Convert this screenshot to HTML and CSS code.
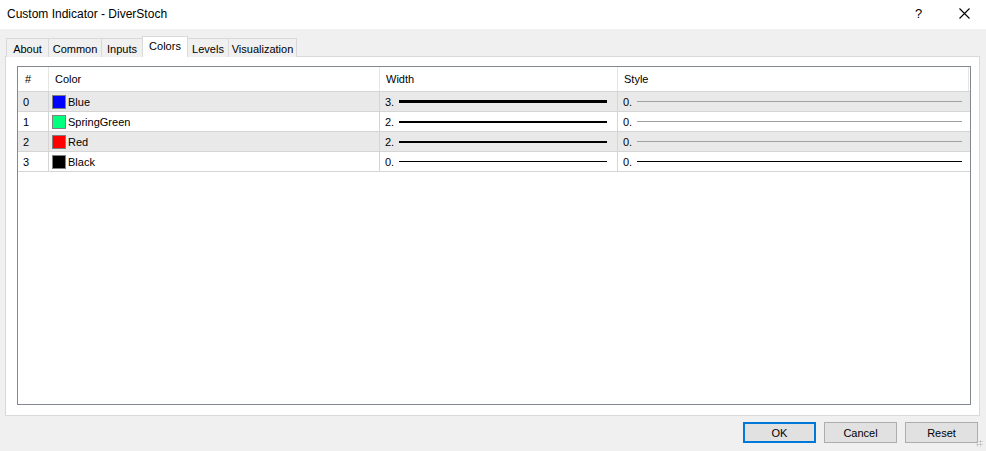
FILE: index.html
```html
<!DOCTYPE html>
<html lang="en">
  <head>
    <meta charset="UTF-8" />
    <title>Custom Indicator - DiverStoch</title>
    <link rel="stylesheet" href="styles.css">
  </head>
  <body>
    <div class="window">
      <!-- title bar -->
      <div class="titlebar">
        <span class="title">Custom Indicator - DiverStoch</span>
        <span class="help">?</span>
        <span class="close">
          <svg width="11" height="11" viewBox="0 0 11 11"><path d="M0.5 0.5 L10.5 10.5 M10.5 0.5 L0.5 10.5" stroke="#000" stroke-width="1.1" fill="none"/></svg>
        </span>
      </div>

      <div class="content">
        <div class="tabs">
          <div class="tab tab-about">About</div>
          <div class="tab tab-common">Common</div>
          <div class="tab tab-inputs">Inputs</div>
          <div class="tab tab-colors active">Colors</div>
          <div class="tab tab-levels">Levels</div>
          <div class="tab tab-vis">Visualization</div>
        </div>

        <div class="panel">
          <div class="grid">
            <div class="row head">
              <div class="cell c-num">#</div>
              <div class="cell c-color">Color</div>
              <div class="cell c-width">Width</div>
              <div class="cell c-style">Style</div>
            </div>

            <div class="row shade">
              <div class="cell c-num">0</div>
              <div class="cell c-color"><span class="swatch" style="background:#0000ff"></span>Blue</div>
              <div class="cell c-width">3.<span class="line w3"></span></div>
              <div class="cell c-style">0.<span class="sline"></span></div>
            </div>
            <div class="row">
              <div class="cell c-num">1</div>
              <div class="cell c-color"><span class="swatch" style="background:#00ff7f"></span>SpringGreen</div>
              <div class="cell c-width">2.<span class="line w2"></span></div>
              <div class="cell c-style">0.<span class="sline"></span></div>
            </div>
            <div class="row shade">
              <div class="cell c-num">2</div>
              <div class="cell c-color"><span class="swatch" style="background:#ff0000"></span>Red</div>
              <div class="cell c-width">2.<span class="line w2"></span></div>
              <div class="cell c-style">0.<span class="sline"></span></div>
            </div>
            <div class="row">
              <div class="cell c-num">3</div>
              <div class="cell c-color"><span class="swatch" style="background:#000000"></span>Black</div>
              <div class="cell c-width">0.<span class="line w1"></span></div>
              <div class="cell c-style">0.<span class="sline dark"></span></div>
            </div>
          </div>
        </div>

        <div class="buttons">
          <button class="btn default">OK</button>
          <button class="btn">Cancel</button>
          <button class="btn">Reset</button>
        </div>
      </div>
      <div class="grip"></div>
    </div>
  </body>
</html>
```

FILE: styles.css
```css
* {
  margin: 0;
  padding: 0;
  box-sizing: border-box;
}

body {
  width: 986px;
  height: 451px;
  overflow: hidden;
  background-color: #f0f0f0;
  font-family: "Liberation Sans", Arial, sans-serif;
  font-size: 11px;
  color: #000;
}

.window {
  width: 986px;
  height: 451px;
  position: relative;
}

/* title bar */
.titlebar {
  height: 29px;
  background-color: #fff;
  display: flex;
  align-items: center;
}

.title {
  flex: 1;
  padding-left: 7px;
  font-size: 12px;
  padding-bottom: 2px;
}

.help {
  width: 12px;
  margin-right: 32px;
  font-size: 13px;
  padding-bottom: 2px;
}

.close {
  width: 11px;
  height: 11px;
  margin-right: 16px;
  margin-bottom: 3px;
  display: flex;
}

/* tabs */
.content {
  padding: 7px 6px 0 5px;
}

.tabs {
  display: flex;
  align-items: flex-start;
  height: 21px;
  margin-bottom: -1px;
  padding-left: 1px;
}

.tab {
  height: 19px;
  margin-top: 2px;
  border: 1px solid #d9d9d9;
  border-bottom: none;
  background-color: #f0f0f0;
  display: flex;
  align-items: center;
  justify-content: center;
  margin-left: -1px;
  padding-top: 1px;
}

.tab-about { width: 43px; margin-left: 0; }
.tab-common { width: 54px; }
.tab-inputs { width: 42px; }
.tab-colors { width: 46px; }
.tab-levels { width: 42px; }
.tab-vis { width: 69px; }

.tab.active {
  height: 21px;
  margin-top: 0;
  background-color: #fff;
  position: relative;
  z-index: 1;
  padding-top: 0;
  padding-bottom: 3px;
}

.panel {
  height: 360px;
  background-color: #fff;
  border: 1px solid #d9d9d9;
  padding: 9px 8px 10px 11px;
}

/* list view */
.grid {
  height: 339px;
  border: 1px solid #828790;
  background-color: #fff;
}

.row {
  display: flex;
  height: 20px;
  border-bottom: 1px solid #d5d5d5;
}

.row.head {
  height: 25px;
  border-bottom: 1px solid #d5d5d5;
}

.row.shade {
  background-color: #e9e9e9;
}

.cell {
  display: flex;
  align-items: center;
  padding-left: 5px;
  border-right: 1px solid #d5d5d5;
  white-space: nowrap;
}

.head .cell {
  border-right-color: #e5e5e5;
}

.c-num { width: 31px; }
.c-color { width: 331px; padding-left: 3px; }
.c-width { width: 238px; padding-right: 10px; }
.c-style { width: 351px; padding-right: 7px; }

.head .c-num { padding-left: 7px; }
.head .c-color { padding-left: 6px; }
.head .c-width { padding-left: 6px; }
.head .c-style { padding-left: 6px; }

.row:not(.head) .c-style {
  border-right: none;
}

.swatch {
  width: 14px;
  height: 14px;
  border: 1px solid #808080;
  margin-right: 2px;
}

.line {
  flex: 1;
  margin-left: 5px;
  background-color: #000;
}

.w3 { height: 3px; }
.w2 { height: 2px; }
.w1 { height: 1px; }

.sline {
  flex: 1;
  margin-left: 5px;
  height: 1px;
  background-color: #a0a0a0;
}

.sline.dark {
  background-color: #000;
}

/* buttons */
.buttons {
  display: flex;
  justify-content: flex-end;
  gap: 8px;
  padding-top: 6px;
  padding-right: 2px;
}

.btn {
  width: 73px;
  height: 21px;
  border: 1px solid #adadad;
  background-color: #e1e1e1;
  font-family: "Liberation Sans", Arial, sans-serif;
  font-size: 11px;
  color: #000;
}

.btn.default {
  border: 2px solid #0078d7;
}

.grip {
  position: absolute;
  right: 3px;
  bottom: 4px;
  width: 7px;
  height: 7px;
  background-image: radial-gradient(circle, #b8b8b8 0.9px, transparent 1.1px);
  background-size: 3px 3px;
}
```
